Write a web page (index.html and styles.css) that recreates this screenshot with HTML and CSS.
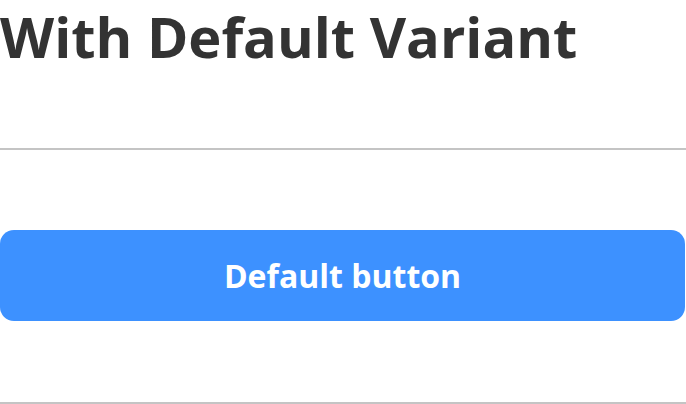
FILE: index.html
```html
<!DOCTYPE html>
<html>
<head>
<meta charset="utf-8">
<link rel="stylesheet" href="styles.css">
</head>
<body>
<div class="page">
  <h1 class="title">With Default Variant</h1>
  <hr class="divider">
  <div class="section">
    <button class="btn">Default button</button>
  </div>
  <hr class="divider divider-end">
</div>
</body>
</html>
```
FILE: styles.css
```css
html, body {
  margin: 0;
  padding: 0;
  background: #fff;
}
.page {
  font-family: "Open Sans", sans-serif;
  width: 686px;
}
.title {
  margin: 0;
  font-size: 56px;
  font-weight: 700;
  line-height: 72px;
  color: #333333;
  height: 72px;
}
.divider {
  margin: 76px 0 0 0;
  border: 0;
  height: 2px;
  background: #c4c4c4;
}
.section {
  padding: 80px 0 81px 0;
}
.btn {
  display: block;
  width: 685px;
  height: 91px;
  border: 0;
  border-radius: 14px;
  background: #3d91ff;
  color: #fff;
  font-family: "Open Sans", sans-serif;
  font-weight: 700;
  font-size: 32px;
  padding: 0;
}
.divider-end {
  margin-top: 0;
}
```
